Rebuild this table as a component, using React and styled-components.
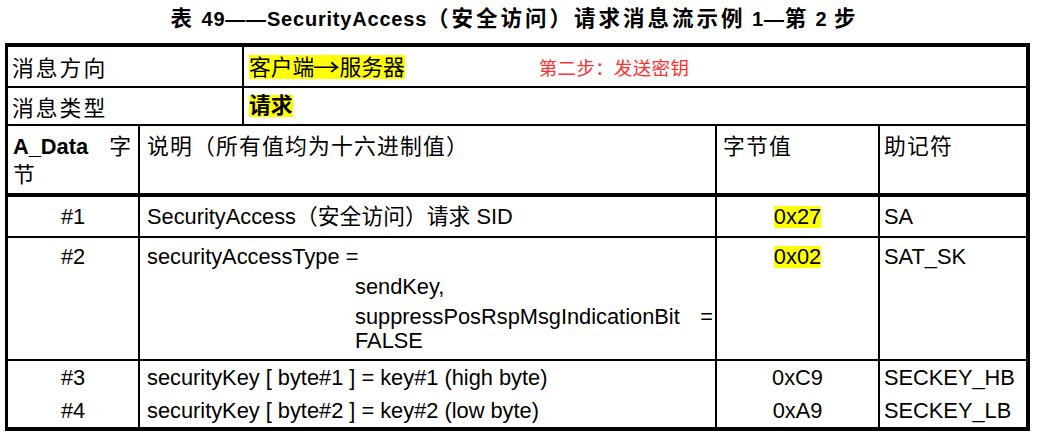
import React from "react";
import styled, { createGlobalStyle } from "styled-components";

const GlobalStyle = createGlobalStyle`
  html, body { margin: 0; padding: 0; background: #fff; }
  body {
    font-family: "Liberation Sans", "Noto Sans CJK SC", sans-serif;
    color: #000;
  }
`;

const Page = styled.div`
  width: 1042px;
  height: 439px;
  padding-left: 5px;
  box-sizing: border-box;
  overflow: hidden;
`;

const Title = styled.h1`
  margin: 0 0 5px;
  width: 1025px;
  height: 38px;
  line-height: 38px;
  padding-right: 6px;
  box-sizing: border-box;
  text-align: center;
  font-size: 20px;
  font-weight: 700;
  letter-spacing: 0.8px;
  white-space: nowrap;
`;

const TitleCjk = styled.span`
  font-size: 21.5px;
  letter-spacing: 3px;
`;

const Table = styled.div`
  width: 1025px;
  box-sizing: border-box;
  border: 4px solid #000;
  border-left-width: 3px;
  font-size: 21.8px;
`;

const InfoRow = styled.div`
  display: grid;
  grid-template-columns: 236px 1fr;
  height: ${(p) => p.$h}px;
  box-sizing: border-box;
  border-bottom: 2px solid #000;
`;

const InfoLabel = styled.div`
  display: flex;
  align-items: center;
  padding-left: 4px;
  border-right: 2px solid #000;
  letter-spacing: 2px;
`;

const InfoValue = styled.div`
  display: flex;
  align-items: center;
  padding-left: 5px;
`;

const Mark = styled.span`
  display: inline-block;
  background: #ffff00;
  line-height: 22px;
  font-weight: ${(p) => (p.$bold ? 700 : 400)};
  white-space: nowrap;
`;

const Arrow = styled.span`
  font-family: "Noto Sans CJK SC", "DejaVu Sans", sans-serif;
  display: inline-block;
  width: 25px;
  text-align: center;
  transform: scaleX(1.25);
`;

const Note = styled.span`
  margin-left: 134px;
  color: #ff3030;
  font-size: 18.5px;
  letter-spacing: 0.3px;
`;

const GridRow = styled.div`
  display: grid;
  grid-template-columns: 132px 577px 163px 146px;
  height: ${(p) => p.$h}px;
  box-sizing: border-box;
  border-bottom: ${(p) => p.$border}px solid #000;
  line-height: ${(p) => p.$lh}px;
`;

const Cell = styled.div`
  box-sizing: border-box;
  padding: ${(p) => p.$pt || 0}px ${(p) => p.$pr || 0}px 0 ${(p) => p.$pl || 0}px;
  text-align: ${(p) => p.$align || "left"};
  border-right: ${(p) => (p.$last ? "none" : "2px solid #000")};
`;

const HeadCell = styled(Cell)`
  letter-spacing: ${(p) => (p.$spaced ? "1.2px" : "0")};
`;

const Bold = styled.b`
  font-weight: 700;
  letter-spacing: 0;
`;

const Para = styled.div`
  margin: ${(p) => p.$mt || 0}px 0 0 ${(p) => p.$indent || 0}px;
  text-align: ${(p) => (p.$justify ? "justify" : "left")};
  line-height: ${(p) => (p.$lh ? `${p.$lh}px` : "inherit")};
`;

const Line = styled.div``;

export default function App() {
  return (
    <Page>
      <GlobalStyle />
      <Title>
        <TitleCjk>表</TitleCjk> 49——SecurityAccess<TitleCjk>（安全访问）请求消息流示例</TitleCjk> 1—<TitleCjk>第</TitleCjk> 2 <TitleCjk>步</TitleCjk>
      </Title>
      <Table>
        <InfoRow $h={41}>
          <InfoLabel>消息方向</InfoLabel>
          <InfoValue>
            <Mark>
              客户端<Arrow>→</Arrow>服务器
            </Mark>
            <Note>第二步：发送密钥</Note>
          </InfoValue>
        </InfoRow>
        <InfoRow $h={38}>
          <InfoLabel>消息类型</InfoLabel>
          <InfoValue>
            <Mark $bold>请求</Mark>
          </InfoValue>
        </InfoRow>

        <GridRow $h={71} $border={4} $lh={28}>
          <HeadCell $pt={7} $pl={5} $pr={7} $align="justify">
            <Bold>A_Data</Bold> 字节
          </HeadCell>
          <HeadCell $pt={7} $pl={7} $spaced>说明（所有值均为十六进制值）</HeadCell>
          <HeadCell $pt={7} $pl={6} $spaced>字节值</HeadCell>
          <HeadCell $pt={7} $pl={4} $spaced $last>助记符</HeadCell>
        </GridRow>

        <GridRow $h={41} $border={2} $lh={39}>
          <Cell $align="center">#1</Cell>
          <Cell $pl={7}>SecurityAccess（安全访问）请求 SID</Cell>
          <Cell $align="center">
            <Mark>0x27</Mark>
          </Cell>
          <Cell $pl={4} $last>SA</Cell>
        </GridRow>

        <GridRow $h={123} $border={2} $lh={26}>
          <Cell $align="center" $pt={6}>#2</Cell>
          <Cell $pl={7} $pr={2} $pt={6}>
            <Para>securityAccessType =</Para>
            <Para $indent={208} $mt={4}>sendKey,</Para>
            <Para $indent={208} $mt={5} $lh={24} $justify>
              suppressPosRspMsgIndicationBit = FALSE
            </Para>
          </Cell>
          <Cell $align="center" $pt={6}>
            <Mark>0x02</Mark>
          </Cell>
          <Cell $pl={4} $pt={6} $last>SAT_SK</Cell>
        </GridRow>

        <GridRow $h={66} $border={0} $lh={33}>
          <Cell $align="center">
            <Line>#3</Line>
            <Line>#4</Line>
          </Cell>
          <Cell $pl={7}>
            <Line>securityKey [ byte#1 ] = key#1 (high byte)</Line>
            <Line>securityKey [ byte#2 ] = key#2 (low byte)</Line>
          </Cell>
          <Cell $align="center">
            <Line>0xC9</Line>
            <Line>0xA9</Line>
          </Cell>
          <Cell $pl={4} $last>
            <Line>SECKEY_HB</Line>
            <Line>SECKEY_LB</Line>
          </Cell>
        </GridRow>
      </Table>
    </Page>
  );
}
